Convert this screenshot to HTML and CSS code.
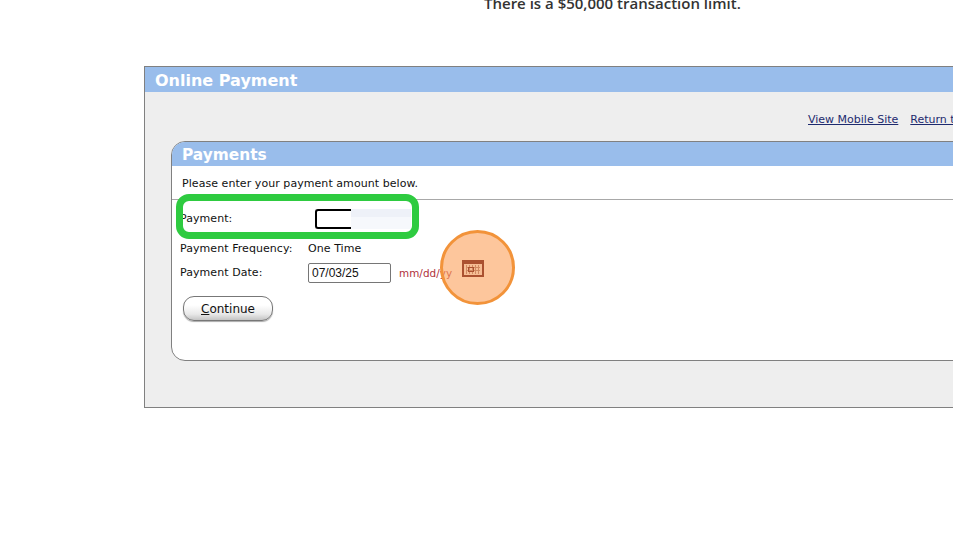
FILE: index.html
```html
<!DOCTYPE html>
<html lang="en">
<head>
<meta charset="utf-8">
<title>Online Payment</title>
<link rel="stylesheet" href="styles.css">
</head>
<body>
<div class="page">
  <div class="notice"><p class="notice-text">There is a $50,000 transaction limit.</p></div>
  <section class="outer">
    <h1 class="outer-title">Online Payment</h1>
    <nav class="links"><a href="#">View Mobile Site</a><a href="#">Return t</a></nav>
    <section class="inner">
      <h2 class="inner-title">Payments</h2>
      <p class="intro">Please enter your payment amount below.</p>
      <div class="form">
        <div class="row row-payment">
          <span class="label">Payment:</span>
          <span class="amount"><span class="amount-edge"></span><span class="amount-blur"></span></span>
        </div>
        <div class="row row-frequency">
          <span class="label">Payment Frequency:</span>
          <span class="value">One Time</span>
        </div>
        <div class="row row-date">
          <span class="label">Payment Date:</span>
          <input class="date" type="text" value="07/03/25">
          <span class="hint">mm/dd/yy</span>
        </div>
        <button class="continue" type="button"><u>C</u>ontinue</button>
      </div>
    </section>
  </section>
  <div class="mark-green"></div>
  <div class="mark-orange"></div>
  <svg class="cal" width="22" height="17" viewBox="0 0 22 17" aria-hidden="true">
    <rect x="1" y="1" width="20" height="15" fill="#f6bd94" stroke="#ab5130" stroke-width="2"/>
    <rect x="2" y="2" width="18" height="2" fill="#ab5130"/>
    <path d="M4.500 5v9M7.500 5v9M10.500 5v9M13.500 5v9M16.500 5v9M4 7.500h14M4 10.500h14" stroke="#d08a62" stroke-width="1"/>
    <rect x="6.500" y="7.500" width="5" height="4" fill="none" stroke="#ab5130" stroke-width="1"/>
  </svg>
</div>
</body>
</html>
```
FILE: styles.css
```css
html, body {
  margin: 0;
  padding: 0;
  background: #fff;
}
.page {
  position: relative;
  width: 953px;
  height: 533px;
  overflow: hidden;
  font-family: "DejaVu Sans", Verdana, sans-serif;
  color: #111;
}
.notice {
  height: 66px;
  padding-left: 484px;
  overflow: hidden;
}
.notice-text {
  margin: -7px 0 0;
  font-family: "Open Sans", sans-serif;
  font-weight: 600;
  font-size: 15px;
  line-height: 20px;
  color: #333;
  white-space: nowrap;
}
.outer {
  box-sizing: border-box;
  width: 1000px;
  height: 342px;
  margin-left: 144px;
  background: #eee;
  border: 1px solid #808080;
  display: flex;
  flex-direction: column;
}
.outer-title {
  margin: 0;
  height: 25px;
  padding-left: 10px;
  background: #99bdeb;
  color: #fff;
  font-size: 16px;
  font-weight: 700;
  line-height: 27px;
  white-space: nowrap;
}
.links {
  display: flex;
  gap: 12px;
  height: 49px;
  box-sizing: border-box;
  padding: 21px 0 0 663px;
  font-size: 11px;
  line-height: 14px;
  white-space: nowrap;
}
.links a {
  color: #1d2a6e;
}
.inner {
  box-sizing: border-box;
  width: 900px;
  height: 220px;
  margin-left: 26px;
  background: #fff;
  border: 1px solid #808080;
  border-radius: 14px 0 0 14px;
  overflow: hidden;
}
.inner-title {
  margin: 0;
  height: 24px;
  padding-left: 10px;
  background: #99bdeb;
  color: #fff;
  font-size: 15.400px;
  font-weight: 700;
  line-height: 26px;
}
.intro {
  height: 34px;
  box-sizing: border-box;
  margin: 0;
  padding: 11px 0 0 10px;
  font-size: 11px;
  line-height: 14px;
  letter-spacing: 0.06px;
  border-bottom: 1px solid #a8a8a8;
  color: #111;
}
.form {
  padding: 1px 0 0 8px;
  font-size: 11px;
  line-height: 14px;
  letter-spacing: 0.06px;
}
.row {
  display: flex;
  align-items: center;
}
.label {
  flex: none;
  width: 128px;
}
.row-payment {
  height: 38px;
}
.row-payment .label {
  margin-top: -2px;
}
.amount {
  display: flex;
  height: 20px;
  margin: -2px 0 0 7px;
}
.amount-edge {
  box-sizing: border-box;
  width: 36px;
  height: 20px;
  border: 2px solid #000;
  border-right: 0;
  border-radius: 3px 0 0 3px;
}
.amount-blur {
  width: 60px;
  height: 20px;
  background: linear-gradient(#eef1f8 0 40%, #f6f8fc 40% 100%);
}
.row-frequency {
  height: 24px;
  margin-top: -2px;
}
.row-date {
  height: 24px;
}
.date {
  box-sizing: border-box;
  width: 83px;
  height: 20px;
  padding: 0 3px;
  border: 1px solid #767676;
  border-radius: 2px;
  font-family: "Liberation Sans", Arial, sans-serif;
  font-size: 12px;
  color: #111;
  background: #fff;
}
.hint {
  margin-left: 8px;
  font-size: 10.400px;
  color: #b0303a;
}
.continue {
  display: block;
  box-sizing: border-box;
  width: 90px;
  height: 25px;
  margin: 11px 0 0 3px;
  padding: 0;
  border: 1px solid #777;
  border-radius: 11px;
  background: linear-gradient(#fff 0 35%, #e8e8e8 75%, #c4c4c4);
  box-shadow: 0 1px 1px #aaa;
  font-family: "DejaVu Sans", Verdana, sans-serif;
  font-size: 12px;
  color: #111;
}
.mark-green {
  position: absolute;
  left: 176px;
  top: 194px;
  box-sizing: border-box;
  width: 243px;
  height: 45px;
  border: 7px solid #2ecb40;
  border-radius: 13px;
}
.mark-orange {
  position: absolute;
  left: 440px;
  top: 230px;
  box-sizing: border-box;
  width: 75px;
  height: 75px;
  border: 3px solid #f2933a;
  border-radius: 50%;
  background: rgba(252, 160, 90, 0.6);
}
.cal {
  position: absolute;
  left: 462px;
  top: 260px;
}
```
